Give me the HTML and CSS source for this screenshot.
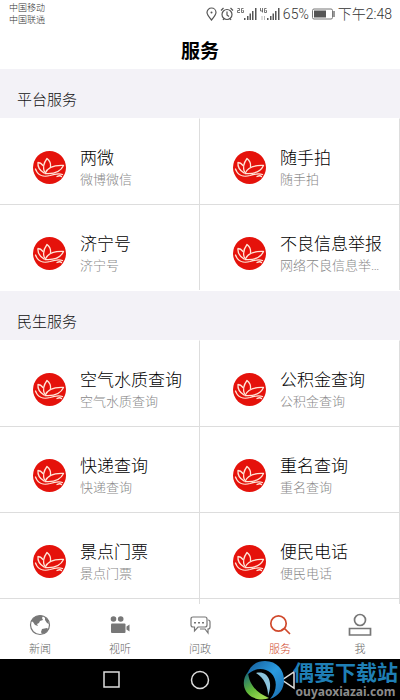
FILE: index.html
```html
<!DOCTYPE html>
<html lang="zh-CN">
<head>
<meta charset="utf-8">
<meta name="viewport" content="width=device-width, initial-scale=1">
<title>服务</title>
<link rel="stylesheet" href="styles.css">
</head>
<body>
<svg class="defs" aria-hidden="true">
  <symbol id="lotus" viewBox="0 0 33 33">
    <circle cx="16.500" cy="16.500" r="16.500" fill="#e5120b"/>
    <g fill="none" stroke="#ffe6d8" stroke-width="1.300" stroke-linejoin="round" stroke-linecap="round">
      <path d="M11.500 21C9.500 16 11 11.500 14 7.500C16.500 9.500 18 12 17.500 15.500"/>
      <path d="M12 22.500C14 17.500 20 14 30.500 14.500C28 20 22 23 13 22.500Z"/>
      <path d="M10 14.500C8.500 12.500 7 11.500 5 11.500C4.500 15.500 7 19.500 11 22"/>
      <path d="M2.500 18C4.500 24 10 26.500 17 24.500C21.500 23 26 22 29.500 23.500"/>
      <path d="M24 25.500C26 24.500 27.500 24.500 28.500 25.500"/>
    </g>
  </symbol>
</svg>
<div class="status">
  <div class="carriers"><span>中国移动</span><span>中国联通</span></div>
  <div class="indicators">
    <svg width="11" height="14" viewBox="0 0 11 14"><path d="M5.500 13C3 10 1 7.500 1 5.500a4.500 4.500 0 0 1 9 0C10 7.500 8 10 5.500 13Z" fill="none" stroke="#555" stroke-width="1.200"/><circle cx="5.500" cy="5.500" r="1" fill="#555"/></svg>
    <svg width="14" height="14" viewBox="0 0 14 14" fill="none" stroke="#555" stroke-width="1.200"><circle cx="7" cy="7.500" r="5"/><path d="M7 4.500V8l2 1.500M1 3.500L3.500 1M13 3.500L10.500 1M3 13l1-1.500M11 13l-1-1.500"/></svg>
    <svg width="20" height="14" viewBox="0 0 20 14"><path d="M.5 1.500h2v2h-2v2h2.500M6.500 1.500h-2v4h2v-2h-1" fill="none" stroke="#555" stroke-width=".8"/><path d="M7 11h1.500v2H7zM10 9h1.500v4H10zM12.500 6.500H14V13h-1.500zM15 4h1.500v9H15zM18 1h1.500v12H18z" fill="#555"/></svg>
    <svg width="20" height="14" viewBox="0 0 20 14"><path d="M.5 1v3h2.500M2.500 1v4.500M6.500 1.500h-2v4h2v-2h-1" fill="none" stroke="#555" stroke-width=".8"/><path d="M2 9v4M4.500 9v4" stroke="#bbb"/><path d="M7 11h1.500v2H7zM10 9h1.500v4H10zM12.500 6.500H14V13h-1.500zM15 4h1.500v9H15zM18 1h1.500v12H18z" fill="#555"/></svg>
    <span>65%</span>
    <svg width="23" height="12" viewBox="0 0 23 12"><rect x=".5" y="1" width="20" height="10" rx="1.500" fill="none" stroke="#777"/><path d="M2 2.500h12v7H2z" fill="#555"/><path d="M22 3v6" stroke="#777" stroke-width="1.500"/></svg>
    <span>下午2:48</span>
  </div>
</div>
<header class="titlebar"><h1>服务</h1></header>
<main class="content">
  <section>
    <h2>平台服务</h2>
    <div class="grid">
      <a class="cell" href="#"><svg class="logo"><use href="#lotus"/></svg><span class="label"><b>两微</b><small>微博微信</small></span></a>
      <a class="cell" href="#"><svg class="logo"><use href="#lotus"/></svg><span class="label"><b>随手拍</b><small>随手拍</small></span></a>
      <a class="cell" href="#"><svg class="logo"><use href="#lotus"/></svg><span class="label"><b>济宁号</b><small>济宁号</small></span></a>
      <a class="cell" href="#"><svg class="logo"><use href="#lotus"/></svg><span class="label"><b>不良信息举报</b><small>网络不良信息举报</small></span></a>
    </div>
  </section>
  <section>
    <h2>民生服务</h2>
    <div class="grid">
      <a class="cell" href="#"><svg class="logo"><use href="#lotus"/></svg><span class="label"><b>空气水质查询</b><small>空气水质查询</small></span></a>
      <a class="cell" href="#"><svg class="logo"><use href="#lotus"/></svg><span class="label"><b>公积金查询</b><small>公积金查询</small></span></a>
      <a class="cell" href="#"><svg class="logo"><use href="#lotus"/></svg><span class="label"><b>快递查询</b><small>快递查询</small></span></a>
      <a class="cell" href="#"><svg class="logo"><use href="#lotus"/></svg><span class="label"><b>重名查询</b><small>重名查询</small></span></a>
      <a class="cell" href="#"><svg class="logo"><use href="#lotus"/></svg><span class="label"><b>景点门票</b><small>景点门票</small></span></a>
      <a class="cell" href="#"><svg class="logo"><use href="#lotus"/></svg><span class="label"><b>便民电话</b><small>便民电话</small></span></a>
      <span class="cell"></span>
      <span class="cell"></span>
    </div>
  </section>
</main>
<nav class="tabs">
  <a href="#"><svg width="24" height="24" viewBox="0 0 24 24"><circle cx="12" cy="12" r="9.500" fill="none" stroke="#777" stroke-width="1.200"/><path d="M5 6C8 2.500 12 2 15 3l-1 2 1 2-3 1-1 2-2 1 1 2-3-1-2-3-2-1zM14 16l5-1 1 1c-1 3-3 4-6 5l-1-2zM17 4l3 3 1 4-2-1-2-3z" fill="#777"/></svg><span>新闻</span></a>
  <a href="#"><svg width="24" height="24" viewBox="0 0 24 24" fill="#777"><circle cx="5.500" cy="6" r="2.800"/><circle cx="12.700" cy="6" r="2.800"/><rect x="3" y="10.500" width="14.500" height="9.500" rx="1"/><path d="M18.500 13.500l3-2v7l-3-2z"/></svg><span>视听</span></a>
  <a href="#"><svg width="24" height="24" viewBox="0 0 24 24"><path d="M5 4h12q2 0 2 2v6q0 2-2 2h-7l-3.500 4v-4H5q-2 0-2-2V6q0-2 2-2z" fill="none" stroke="#777" stroke-width="1.200"/><path d="M20 7q2 0 2 2v5q0 2-2 2v4l-3-4h-5" fill="none" stroke="#777" stroke-width="1.200"/><path d="M6 9h2v1.500H6zM10 9h2v1.500h-2zM14 9h2v1.500h-2z" fill="#777"/></svg><span>问政</span></a>
  <a class="active" href="#"><svg width="24" height="24" viewBox="0 0 24 24" fill="none" stroke="#d0492c" stroke-width="1.700"><circle cx="10.500" cy="10.500" r="7.700"/><path d="M13.500 17l3-1.500 5.500 5.500"/></svg><span>服务</span></a>
  <a href="#"><svg width="24" height="24" viewBox="0 0 24 24" fill="none" stroke="#777" stroke-width="1.700"><circle cx="12" cy="7" r="5.500"/><path d="M1.500 15.500h21v6.500h-21z"/></svg><span>我</span></a>
</nav>
<footer class="system">
  <button aria-label="最近任务"><svg width="20" height="20" viewBox="0 0 20 20"><path d="M2 2h15v15H2z"/></svg></button>
  <button aria-label="主屏幕"><svg width="20" height="20" viewBox="0 0 20 20"><circle cx="10" cy="10" r="8.500"/></svg></button>
  <button aria-label="返回"><svg width="20" height="20" viewBox="0 0 20 20"><path d="M16 2v16L4 10z"/></svg></button>
  <div class="watermark">
    <svg width="42" height="40" viewBox="0 0 42 40"><defs><linearGradient id="leaf" x1="0" y1="0" x2=".6" y2="1"><stop offset="0" stop-color="#125f80"/><stop offset=".6" stop-color="#5fb53a"/><stop offset="1" stop-color="#9bd84e"/></linearGradient><linearGradient id="arc" x1="0" y1="0" x2="1" y2="1"><stop offset="0" stop-color="#155a96"/><stop offset=".5" stop-color="#2a9be0"/><stop offset="1" stop-color="#1b6cae"/></linearGradient></defs><path d="M4 15C7 5 14 1 22 1C34 1 41 10 41 20C41 29 36 36 27 39C34 31 35 20 28 13C21 7 11 8 4 15Z" fill="url(#arc)"/><path d="M5 12C-2 20 0 32 9 37C15 40 22 40 26 38C14 33 6 25 5 12Z" fill="url(#leaf)"/><path d="M13 13C24 10 31 21 25 36C25 26 21 18 13 13Z" fill="#8cc4dc"/></svg>
    <p><strong>偶要下载站</strong><span>ouyaoxiazai.com</span></p>
  </div>
</footer>
</body>
</html>
```
FILE: styles.css
```css
* { box-sizing: border-box; }
body {
  margin: 0;
  height: 100vh;
  display: flex;
  flex-direction: column;
  background: #fff;
  color: #111;
  font-family: Roboto, "Noto Sans CJK SC", sans-serif;
  font-weight: 300;
}
h1, h2, p { margin: 0; }
a { color: inherit; text-decoration: none; }
svg { display: block; flex: none; }
.defs { position: absolute; width: 0; height: 0; }
.status {
  height: 28px;
  padding: 0 8px 0 9px;
  display: flex;
  justify-content: space-between;
  color: #333;
}
.carriers { display: flex; flex-direction: column; padding-top: 2px; font-size: 9px; line-height: 12px; }
.indicators { display: flex; align-items: center; gap: 3px; font-size: 14px; line-height: 20px; }
.titlebar { height: 40px; display: flex; align-items: center; justify-content: center; padding-top: 8px; }
h1 { font-size: 19px; line-height: 28px; font-weight: 700; color: #000; }
.content { flex: 1; min-height: 0; overflow: hidden; }
h2 {
  height: 50px;
  padding: 9px 17px 0;
  border-top: 1px solid #fff;
  background: #f3f2f7;
  background-clip: padding-box;
  font-size: 15px;
  line-height: 44px;
  font-weight: 300;
}
.grid { display: grid; grid-template-columns: repeat(2, minmax(0, 1fr)); }
.cell {
  height: 86px;
  padding: 12px 16px 0 33px;
  border-top: 1px solid #ddd;
  border-right: 1px solid #ddd;
  display: flex;
  align-items: center;
  gap: 14px;
}
.cell:nth-child(-n+2) { border-top-color: #fff; }
.logo { width: 33px; height: 33px; }
.label { flex: 1; min-width: 0; padding-top: 2px; display: flex; flex-direction: column; }
.label b { font-size: 17px; line-height: 22px; font-weight: 300; color: #000; white-space: nowrap; }
.label small { font-size: 13px; line-height: 22px; color: #888; white-space: nowrap; overflow: hidden; text-overflow: ellipsis; }
.tabs { height: 55px; display: grid; grid-template-columns: repeat(5, 1fr); background: #fff; color: #666; }
.tabs a { display: flex; flex-direction: column; align-items: center; padding-top: 9px; font-size: 11px; line-height: 16px; gap: 5px; }
.tabs .active { color: #d0492c; }
.system { position: relative; height: 41px; background: #000; display: flex; justify-content: center; gap: 68px; }
.system button { border: 0; padding: 0; background: none; }
.system button svg { fill: none; stroke: #ddd; stroke-width: 1.5; }
.watermark { position: absolute; right: 2px; bottom: 0; display: flex; gap: 8px; }
.watermark p { display: flex; flex-direction: column; align-items: center; }
.watermark strong { font-size: 21px; line-height: 26px; font-weight: 700; color: #1f7fb5; }
.watermark span { font: 700 12px/12px "Noto Sans", sans-serif; color: #8c8c8c; }
```
